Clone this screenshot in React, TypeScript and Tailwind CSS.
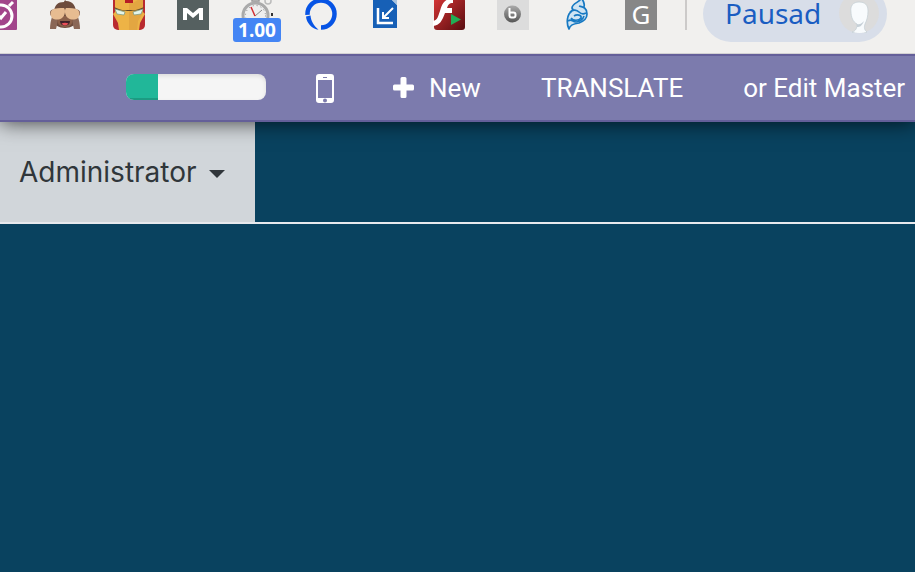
import type { ReactNode } from "react";

function Extension({ name, children }: { name: string; children: ReactNode }) {
  return (
    <button type="button" aria-label={name} className="h-[30px] w-8 shrink-0">
      <svg viewBox="0 2 32 30" className="h-[30px] w-8">
        {children}
      </svg>
    </button>
  );
}

function BrowserToolbar() {
  return (
    <div className="relative z-10 flex h-[54px] items-start overflow-hidden border-b border-[#d3d1d3] bg-[#f1f0ee]">
      <div className="-ml-[15px] flex shrink-0 gap-8">
        <Extension name="Timer">
          <rect width="32" height="32" rx="1" fill="#a2458b" />
          <circle cx="16" cy="18" r="11" fill="none" stroke="#fff" strokeWidth="3" />
          <path d="M24 8l4-4M12 16l4 4 5-6" fill="none" stroke="#fff" strokeWidth="3" />
        </Extension>
        <Extension name="Monkey">
          <circle cx="4.500" cy="15" r="3.500" fill="#795548" />
          <circle cx="27.500" cy="15" r="3.500" fill="#795548" />
          <path d="M5 15C5 7 9 4 15 4c0 0 1-3 2-1 7 0 10 5 10 12v8c0 4-5 7-11 7S5 27 5 23z" fill="#6d4c3d" />
          <path d="M1 31c0-5 1-9 2-12l6 1-1 7-1 4zM31 31c0-5-1-9-2-12l-6 1 1 7 1 4z" fill="#8a6756" />
          <path d="M9 18h14c2 7-1 11-7 11S7 25 9 18z" fill="#8b6049" />
          <path d="M3 12c3-2 8-2 12-2 2 2 1 8-2 10-3 2-7 2-10 0-2-3-2-6 0-8zM29 12c-3-2-8-2-12-2-2 2-1 8 2 10 3 2 7 2 10 0 2-3 2-6 0-8z" fill="#e7bc91" />
          <path d="M11 23h10c0 3-2 4.500-5 4.500S11 26 11 23z" fill="#3e2029" />
          <path d="M12.500 25.500c2-1 5-1 7 0-2 2.500-5 2.500-7 0z" fill="#e94e58" />
        </Extension>
        <Extension name="Iron mask">
          <path d="M0 0h32v27a5 5 0 0 1-5 5H5a5 5 0 0 1-5-5z" fill="#b92a2f" />
          <path d="M2 0h28v14l2 2-5 9-1 7H6l-1-7-5-9 2-2z" fill="#edb346" />
          <path d="M12 0h8v5h-8z" fill="#b71d25" />
          <path d="M16 5h4l8-5h2v15l-5 8-1 9h-8z" fill="#d9993b" opacity=".5" />
          <path d="M1 9c5 2 9 4 13 3h4c4 1 8-1 13-3l-2 3-11 1h-4L3 12z" fill="#624a25" />
          <path d="M2 11l10 3-1 3-7-1zM30 11l-10 3 1 3 7-1z" fill="#e5f5e9" stroke="#769681" strokeWidth=".7" />
        </Extension>
        <Extension name="M">
          <path d="M0 0h32v32H0z" fill="#556060" />
          <path d="M6 22V10h4l6 5 6-5h4v12h-4v-7l-6 5-6-5v7z" fill="#fff" />
        </Extension>
        <div className="relative">
          <Extension name="Video speed">
            <circle cx="14.500" cy="17.500" r="12.500" fill="#eee" stroke="#aaa" strokeWidth="3" />
            <circle cx="14.500" cy="17.500" r="10" fill="none" stroke="#888" strokeDasharray="1 3" />
            <path d="M11 0h7v3h-7z" fill="#eee" stroke="#999" strokeWidth="1.500" />
            <circle cx="27" cy="3" r="3" fill="none" stroke="#bbb" strokeWidth="1.500" />
            <path d="M14 18l7-6" stroke="#888" strokeWidth="1" />
            <path d="M10 9l4 9" stroke="#d12d32" strokeWidth="1.500" />
            <path d="M30 15h2v3h-2z" fill="#333" />
          </Extension>
          <span className="absolute top-[18px] -left-2 flex h-6 w-12 items-center justify-center rounded-[3px] bg-[#4485f4] font-['Noto_Sans',sans-serif] text-[19px] font-bold text-white">
            1.00
          </span>
        </div>
        <Extension name="Ring">
          <circle
            cx="16"
            cy="16"
            r="13.500"
            fill="none"
            stroke="#0754e5"
            strokeWidth="4.500"
            strokeDasharray="64 21"
            transform="rotate(90 16 16) translate(0 32) scale(1 -1)"
          />
          <path d="M1 18.500l4.500-1c.5 5.500 3 10 8 14.200C7 31 1.500 25 1 18.500z" fill="#0754e5" />
        </Extension>
        <Extension name="Resize">
          <path d="M4 0h17l7 7v23H4z" fill="#1760b6" />
          <path d="M21 0h7v7z" fill="#a9c4df" />
          <path d="M9 10v15h15" fill="none" stroke="#fff" strokeWidth="2.500" />
          <path d="M24 10L14 20M14 14v6h6" fill="none" stroke="#fff" strokeWidth="2" />
        </Extension>
        <Extension name="Flash player">
          <defs>
            <linearGradient id="flash" x2="1" y2="1">
              <stop stopColor="#d73535" />
              <stop offset="1" stopColor="#570d10" />
            </linearGradient>
          </defs>
          <rect x="1" width="31" height="32" rx="3" fill="url(#flash)" />
          <path d="M20 0v5c-4 0-5 2-6 5h5v5h-7C9 23 7 27 0 28v-5c5-1 5-5 7-10 2-7 4-12 13-13z" fill="#fff" />
          <path d="M18 16l10 5.500L18 27z" fill="#20ad55" />
        </Extension>
        <Extension name="B">
          <defs>
            <linearGradient id="ball" x2="0" y2="1">
              <stop stopColor="#aaa" />
              <stop offset="1" stopColor="#555" />
            </linearGradient>
          </defs>
          <path d="M0 0h32v32H0z" fill="#dcdcdc" />
          <circle cx="15.500" cy="16" r="8.500" fill="url(#ball)" />
          <path d="M12.500 10v7.500q0 2 2 2h2q2 0 2-2v-1q0-2-2-2h-4" fill="none" stroke="#fff" strokeWidth="2" />
        </Extension>
        <Extension name="Blue knot">
          <g fill="#cfe4f3" stroke="#1779c2" strokeWidth="1.700" strokeLinejoin="round">
            <path d="M20 0c0 4-9 5-9 10 1 4 7 4 10 2 4-3 2-9-1-12z" />
            <path d="M18 8c3 1 8 1 8 8 0 5-3 7-8 9-6 1-9 2-10 6-3-6-2-15 3-18" />
            <path d="M9 14c3-3 7-2 9 0s5 2 7 1M10 20c2 3 8 3 10 0 1-3-4-4-7-2M7 23c4-3 4 1 8 1s7-3 8-6" fill="none" />
          </g>
        </Extension>
        <button
          type="button"
          className="flex h-[30px] w-8 shrink-0 items-start justify-center bg-[#878787] font-['Noto_Sans',sans-serif] text-[26px] leading-7 text-white"
        >
          G
        </button>
      </div>
      <div className="ml-7 h-[30px] w-0.5 shrink-0 bg-[#cccac9]" />
      <button
        type="button"
        className="-mt-3.5 ml-4 flex h-14 w-[184px] shrink-0 items-center justify-between rounded-full bg-[#d8dee9] pr-2 pb-0.5 pl-[22px] font-['Noto_Sans',sans-serif] text-[28px] leading-7 text-[#1a5dc2]"
      >
        Pausad
        <svg viewBox="0 0 40 40" className="h-10 w-10" aria-hidden="true">
          <circle cx="20" cy="20" r="20" fill="#dcdcdc" />
          <path
            d="M20 9c-6 0-9 4-8 10 0 5 2 10 6 12 0 4-1 7-5 8 4 2 11 2 15 0-3-2-3-5-2-8 2-4 3-8 3-13 0-6-3-9-9-9z"
            fill="#f8fbfd"
            stroke="#c2cdd3"
            strokeWidth=".7"
          />
          <path d="M18 31c3 1 5-1 7-3-2 5-4 6-7 6z" fill="#c6d0d7" />
        </svg>
      </button>
    </div>
  );
}

function EditorBar() {
  return (
    <nav className="relative flex h-[68px] items-center overflow-hidden border-y-2 border-[#645f99] bg-[#7c7bad] pl-[126px] font-[Roboto,sans-serif] text-[26px] whitespace-nowrap text-white shadow-[0_0_20px_rgba(0,0,0,0.75)]">
      <div
        role="progressbar"
        aria-label="Progress"
        aria-valuenow={23}
        aria-valuemin={0}
        aria-valuemax={100}
        className="mb-0.5 h-[26px] w-[140px] shrink-0 overflow-hidden rounded-lg bg-[#f5f5f5] shadow-[inset_0_2px_4px_rgba(0,0,0,0.1)]"
      >
        <div className="h-full w-8 bg-[#21b799] shadow-[inset_0_-2px_0_rgba(0,0,0,0.15)]" />
      </div>
      <button type="button" aria-label="Mobile preview" className="ml-[50px] shrink-0">
        <svg viewBox="0 0 18 29" className="h-[29px] w-[18px]">
          <path
            fillRule="evenodd"
            fill="#fff"
            d="M3 0h12a3 3 0 0 1 3 3v23a3 3 0 0 1-3 3H3a3 3 0 0 1-3-3V3a3 3 0 0 1 3-3zM2 6v18h14V6zM7 3v1h4V3zM9 24.500a2 2 0 1 0 0 4 2 2 0 0 0 0-4z"
          />
        </svg>
      </button>
      <div className="ml-[59px] flex shrink-0 items-center gap-[60px]">
        <button type="button" className="flex items-center gap-[15px]">
          <svg viewBox="0 0 21 21" className="mb-0.5 h-[21px] w-[21px]" aria-hidden="true">
            <path
              fill="#fff"
              d="M9 0h3a1.500 1.500 0 0 1 1.500 1.500V7.500h6A1.500 1.500 0 0 1 21 9v3a1.500 1.500 0 0 1-1.500 1.500h-6v6A1.500 1.500 0 0 1 12 21H9a1.500 1.500 0 0 1-1.500-1.500v-6h-6A1.500 1.500 0 0 1 0 12V9a1.500 1.500 0 0 1 1.500-1.500h6v-6A1.500 1.500 0 0 1 9 0z"
            />
          </svg>
          New
        </button>
        <button type="button">TRANSLATE</button>
        <a href="#master">or Edit Master</a>
      </div>
    </nav>
  );
}

export default function App() {
  return (
    <div className="min-h-screen overflow-hidden bg-[#09425f]">
      <header className="relative z-10">
        <BrowserToolbar />
        <EditorBar />
      </header>
      <div className="flex h-[102px] border-b-2 border-[#e7e9ed]">
        <button
          type="button"
          className="flex h-full w-[255px] items-center gap-3 bg-[#d1d6da] pl-[19px] font-[Inter,sans-serif] text-[28px] text-[#30363a]"
        >
          Administrator
          <svg viewBox="0 0 16 8" className="mt-1 h-2 w-4" aria-hidden="true">
            <path d="M0 0h16L8 8z" fill="currentColor" />
          </svg>
        </button>
      </div>
    </div>
  );
}
